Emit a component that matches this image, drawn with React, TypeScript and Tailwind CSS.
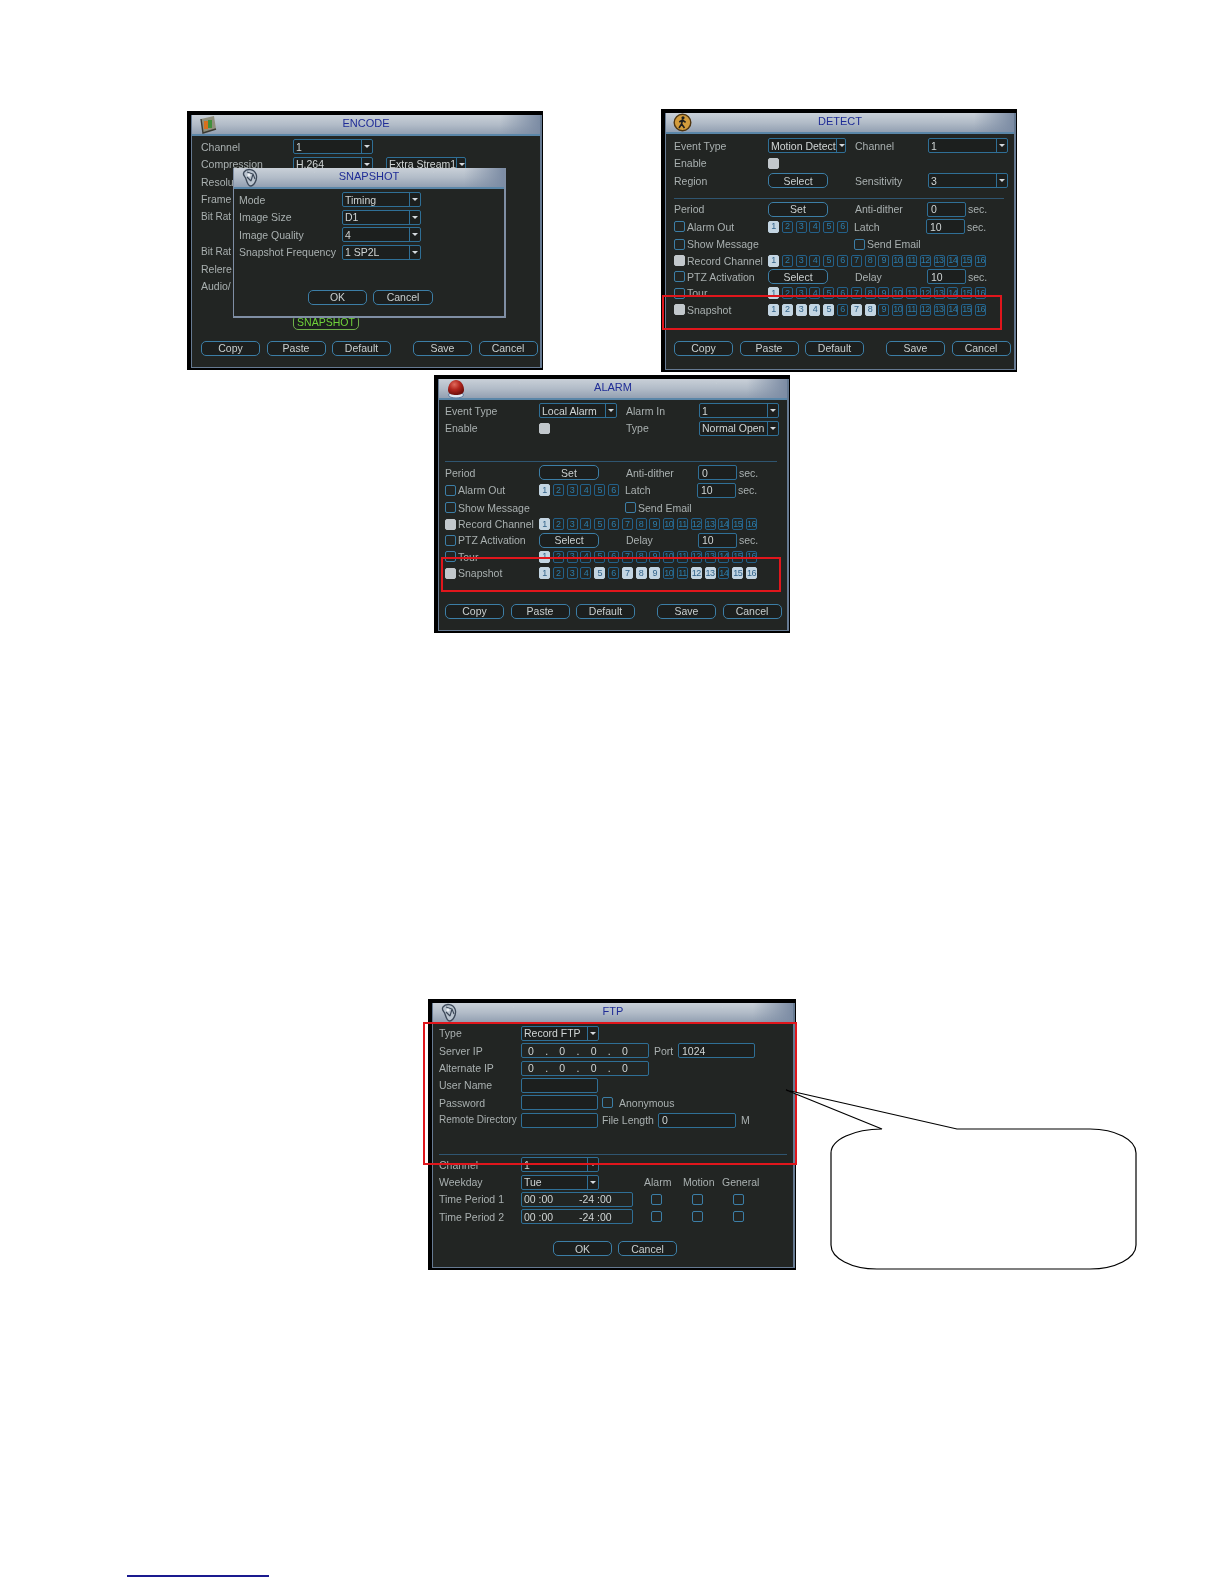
import React from 'react';

type Kind = 'encode' | 'detect' | 'alarm' | 'ghost';

const TitleIcon = ({ kind }: { kind: Kind }) => {
  if (kind === 'encode') {
    return (
      <svg width="18" height="19" viewBox="0 0 18 19">
        <path d="M2 4 L15 1 L17 14 L4 18 Z" fill="#8f8f7c" />
        <rect x="5" y="6" width="4" height="8" fill="#d8701c" />
        <rect x="9" y="5" width="4" height="8" fill="#3f8f3a" />
        <path d="M2 4 L4 18 L17 14" stroke="#3a3a32" strokeWidth="1.4" fill="none" />
      </svg>
    );
  }
  if (kind === 'detect') {
    return (
      <svg width="19" height="19" viewBox="0 0 19 19">
        <circle cx="9.5" cy="9.5" r="8.3" fill="#d39c3c" stroke="#4f3510" strokeWidth="1.4" />
        <circle cx="10" cy="4.8" r="1.6" fill="#1d1d1d" />
        <path d="M9.5 7 L8.6 11 L6 15 M8.6 11 L11.5 15 M6.3 9 L9.5 7 L12.6 9.4" stroke="#1d1d1d" strokeWidth="1.6" fill="none" />
      </svg>
    );
  }
  if (kind === 'alarm') {
    return (
      <svg width="20" height="20" viewBox="0 0 20 20">
        <defs>
          <radialGradient id="dome" cx="0.4" cy="0.3" r="0.7">
            <stop offset="0" stopColor="#e06a5c" />
            <stop offset="0.5" stopColor="#b2261e" />
            <stop offset="1" stopColor="#6e0f0c" />
          </radialGradient>
        </defs>
        <ellipse cx="10" cy="16" rx="7.5" ry="3" fill="#dfe8f2" stroke="#5f7da0" strokeWidth="1" />
        <path d="M2 11 C2 5 6 1 10 1 C14 1 18 5 18 11 C18 15 14 16 10 16 C6 16 2 15 2 11 Z" fill="url(#dome)" />
      </svg>
    );
  }
  return (
    <svg width="18" height="20" viewBox="0 0 18 20">
      <path d="M3 4 C6 0 13 1 15 6 C17 11 13 18 9.5 18 C7 18 6 14 5 11 C4 8 1 7 3 4 Z" fill="#b9c3ce" stroke="#3c4858" strokeWidth="1.3" />
      <path d="M6 4 L12 6 L10 13 M6 9 L10 13 M12 6 L14 11" stroke="#3c4858" strokeWidth="1.1" fill="none" />
      <circle cx="8" cy="7" r="1.6" fill="#eef1f4" />
    </svg>
  );
};

const Title = ({ kind, text }: { kind: Kind; text: string }) => (
  <div className="relative h-[21px] shrink-0 flex items-center justify-center pb-[2px] bg-gradient-to-b from-[#c9d0d8] via-[#b2bcc8] to-[#93a0b2] border-b-2 border-[#5a86a8]">
    <div className="absolute left-[80px] right-[70px] top-[2px] h-[3px] rounded-t-[2px] border-t border-x border-[#c2cad3]" />
    <div className="absolute right-0 top-0 bottom-0 w-[40px] bg-gradient-to-r from-transparent to-[#7c8ca4]" />
    <div className="absolute left-[7px] top-0">
      <TitleIcon kind={kind} />
    </div>
    <span className="relative text-[11px] text-[#1f2c96]">{text}</span>
  </div>
);

const Caret = () => (
  <span className="ml-auto w-[11px] shrink-0 self-stretch flex items-center justify-center border-l border-[#2f6f96]">
    <span className="w-0 h-0 border-l-[3px] border-r-[3px] border-t-[3px] border-l-transparent border-r-transparent border-t-[#d5dade]" />
  </span>
);

const Select = ({ w, text }: { w: string; text: string }) => (
  <div className={`${w} h-[15px] shrink-0 flex items-center pl-[2px] rounded-[2px] border border-[#2f6f96] text-[10.5px] leading-none text-[#d0d5d5] bg-[#1c1f1e]`}>
    <span className="whitespace-nowrap">{text}</span>
    <Caret />
  </div>
);

const Field = ({ w, text }: { w: string; text?: string }) => (
  <div className={`${w} h-[15px] shrink-0 flex items-center pl-[3px] rounded-[2px] border border-[#2f6f96] text-[10.5px] leading-none text-[#d0d5d5] bg-[#1c1f1e]`}>
    {text}
  </div>
);

const Btn = ({ w, text, tone = 'border-[#3c7ea6] text-[#c9cfcf]' }: { w: string; text: string; tone?: string }) => (
  <div className={`${w} h-[15px] shrink-0 flex items-center justify-center rounded-[5px] border text-[10.5px] leading-none bg-[#1c1f1e] ${tone}`}>
    {text}
  </div>
);

const Check = ({ on = false }: { on?: boolean }) => (
  <span className={`inline-block w-[11px] h-[11px] rounded-[2px] border shrink-0 ${on ? 'bg-[#c2c8cc] border-[#c2c8cc]' : 'border-[#3c7ea6]'}`} />
);

const Label = ({ children, className = '', size = 'text-[10.5px]' }: { children?: React.ReactNode; className?: string; size?: string }) => (
  <span className={`${size} shrink-0 leading-none whitespace-nowrap text-[#a9b0b0] ${className}`}>{children}</span>
);

const CheckLabel = ({ on, text }: { on?: boolean; text: string }) => (
  <span className="flex items-center gap-[2px]">
    <Check on={on} />
    <Label>{text}</Label>
  </span>
);

const Nums = ({ on, count = 16 }: { on: number[]; count?: number }) => (
  <div className="flex gap-[2.8px] shrink-0">
    {Array.from({ length: count }, (_, i) => i + 1).map((n) => (
      <span
        key={n}
        className={`w-[11px] h-[12px] flex items-center justify-center rounded-[2px] text-[9px] leading-none tracking-[-0.5px] border ${
          on.includes(n)
            ? 'bg-[#c3d5e2] border-[#c3d5e2] text-[#33648a]'
            : 'border-[#23618a] text-[#2b7cab]'
        }`}
      >
        {n}
      </span>
    ))}
  </div>
);

const Row = ({ h = 'h-[17.5px]', children }: { h?: string; children?: React.ReactNode }) => (
  <div className={`${h} shrink-0 flex items-center`}>{children}</div>
);

const Rule = () => <div className="h-px bg-[#2f5570]" />;

const BottomButtons = () => (
  <div className="flex gap-[6.5px]">
    <Btn w="w-[59px]" text="Copy" />
    <Btn w="w-[59px]" text="Paste" />
    <Btn w="w-[59px]" text="Default" />
    <span className="w-[9px]" />
    <Btn w="w-[59px]" text="Save" />
    <Btn w="w-[59px]" text="Cancel" />
  </div>
);

const Window = ({ className, over, children }: { className: string; over?: React.ReactNode; children: React.ReactNode }) => (
  <div className={`relative border-t-4 border-l-4 border-r border-b-2 border-black bg-black shrink-0 ${className}`}>
    <div className="h-full flex flex-col border-l border-r-2 border-b border-[#667a92] bg-[#222523] blur-[0.35px]">{children}</div>
    {over}
  </div>
);

const RedBox = ({ className }: { className: string }) => (
  <div className={`absolute border-2 border-[#e0161c] ${className}`} />
);

const Encode = () => (
  <Window className="w-[356px] h-[259px]">
    <Title kind="encode" text="ENCODE" />
    <div className="flex-1 pl-[9px] pt-[2px] flex flex-col">
      <Row>
        <Label className="w-[92px]">Channel</Label>
        <Select w="w-[80px]" text="1" />
      </Row>
      <Row>
        <Label className="w-[92px]">Compression</Label>
        <Select w="w-[80px]" text="H.264" />
        <span className="w-[13px]" />
        <Select w="w-[80px]" text="Extra Stream1" />
      </Row>
      <Row><Label>Resolu</Label></Row>
      <Row><Label>Frame</Label></Row>
      <Row><Label size="text-[10px]">Bit Rat</Label></Row>
      <Row />
      <Row><Label size="text-[10px]">Bit Rat</Label></Row>
      <Row><Label>Relere</Label></Row>
      <Row h="h-[16.5px]"><Label>Audio/</Label></Row>
      <div className="flex pl-[92px] mt-[20px]">
        <Btn w="w-[66px]" text="SNAPSHOT" tone="border-[#6fb04a] text-[#6fd23a]" />
      </div>
      <div className="mt-[11px]"><BottomButtons /></div>
    </div>
    {/* snapshot dialog over the encode window */}
    <div className="absolute left-[41px] top-[53px] w-[273px] h-[150px] flex flex-col border-l border-r-2 border-b-2 border-[#7f8ea4] bg-[#222523] blur-[0.35px]">
      <Title kind="ghost" text="SNAPSHOT" />
      <div className="pl-[5px] pt-[2px] flex flex-col">
        {[
          ['Mode', 'Timing'],
          ['Image Size', 'D1'],
          ['Image Quality', '4'],
          ['Snapshot Frequency', '1 SP2L'],
        ].map(([a, b]) => (
          <Row key={a}>
            <Label className="w-[103px]">{a}</Label>
            <Select w="w-[79px]" text={b} />
          </Row>
        ))}
        <div className="flex gap-[6px] pl-[69px] mt-[29px]">
          <Btn w="w-[59px]" text="OK" />
          <Btn w="w-[60px]" text="Cancel" />
        </div>
      </div>
    </div>
  </Window>
);

const AlarmRows = ({ snapOn }: { snapOn: number[] }) => (
  <>
    <Row>
      <Label className="w-[94px]">Period</Label>
      <Btn w="w-[60px]" text="Set" />
      <Label className="ml-[27px] w-[72px]">Anti-dither</Label>
      <Field w="w-[39px]" text="0" />
      <Label className="ml-[2px]">sec.</Label>
    </Row>
    <Row>
      <span className="w-[94px] shrink-0"><CheckLabel text="Alarm Out" /></span>
      <Nums on={[1]} count={6} />
      <Label className="ml-[6px] w-[72px]">Latch</Label>
      <Field w="w-[39px]" text="10" />
      <Label className="ml-[2px]">sec.</Label>
    </Row>
    <Row>
      <span className="w-[180px] shrink-0"><CheckLabel text="Show Message" /></span>
      <CheckLabel text="Send Email" />
    </Row>
    <Row h="h-[15.5px]">
      <span className="w-[94px] shrink-0"><CheckLabel on text="Record Channel" /></span>
      <Nums on={[1]} />
    </Row>
    <Row h="h-[16.5px]">
      <span className="w-[94px] shrink-0"><CheckLabel text="PTZ Activation" /></span>
      <Btn w="w-[60px]" text="Select" />
      <Label className="ml-[27px] w-[72px]">Delay</Label>
      <Field w="w-[39px]" text="10" />
      <Label className="ml-[2px]">sec.</Label>
    </Row>
    <Row h="h-[16.5px]">
      <span className="w-[94px] shrink-0"><CheckLabel text="Tour" /></span>
      <Nums on={[1]} />
    </Row>
    <Row h="h-[16.5px]">
      <span className="w-[94px] shrink-0"><CheckLabel on text="Snapshot" /></span>
      <Nums on={snapOn} />
    </Row>
  </>
);

const Detect = () => (
  <Window className="w-[356px] h-[263px]" over={<RedBox className="left-[-3px] top-[182px] w-[340px] h-[35px]" />}>
    <Title kind="detect" text="DETECT" />
    <div className="flex-1 pl-[8px] pt-[3px] flex flex-col">
      <Row>
        <Label className="w-[94px]">Event Type</Label>
        <Select w="w-[78px]" text="Motion Detect" />
        <Label className="ml-[9px] w-[73px]">Channel</Label>
        <Select w="w-[80px]" text="1" />
      </Row>
      <Row>
        <Label className="w-[94px]">Enable</Label>
        <Check on />
      </Row>
      <Row>
        <Label className="w-[94px]">Region</Label>
        <Btn w="w-[60px]" text="Select" />
        <Label className="ml-[27px] w-[73px]">Sensitivity</Label>
        <Select w="w-[80px]" text="3" />
      </Row>
      <div className="mt-[8px] mb-[2px] mr-[10px]"><Rule /></div>
      <AlarmRows snapOn={[1, 2, 3, 4, 5, 7, 8]} />
      <div className="mt-[23px]"><BottomButtons /></div>
    </div>
  </Window>
);

const Alarm = () => (
  <Window className="w-[356px] h-[258px]" over={<RedBox className="left-[3px] top-[178px] w-[340px] h-[35px]" />}>
    <Title kind="alarm" text="ALARM" />
    <div className="flex-1 pl-[6px] pt-[2px] flex flex-col">
      <Row>
        <Label className="w-[94px]">Event Type</Label>
        <Select w="w-[78px]" text="Local Alarm" />
        <Label className="ml-[9px] w-[73px]">Alarm In</Label>
        <Select w="w-[80px]" text="1" />
      </Row>
      <Row>
        <Label className="w-[94px]">Enable</Label>
        <Check on />
        <Label className="ml-[76px] w-[73px]">Type</Label>
        <Select w="w-[80px]" text="Normal Open" />
      </Row>
      <Row h="h-[24px]" />
      <div className="mb-[2px] mr-[10px]"><Rule /></div>
      <AlarmRows snapOn={[1, 5, 7, 8, 9, 12, 13, 15, 16]} />
      <div className="mt-[22.5px]"><BottomButtons /></div>
    </div>
  </Window>
);

const Ip = () => (
  <div className="w-[128px] h-[15px] shrink-0 flex items-center justify-between pl-[6px] pr-[20px] rounded-[2px] border border-[#2f6f96] text-[10.5px] leading-none text-[#d0d5d5]">
    <span>0</span><span>.</span><span>0</span><span>.</span><span>0</span><span>.</span><span>0</span>
  </div>
);

const Time = () => (
  <div className="w-[112px] h-[15px] shrink-0 flex items-center pl-[2px] rounded-[2px] border border-[#2f6f96] text-[10.5px] leading-none text-[#d0d5d5]">
    <span className="w-[55px]">00 :00</span><span>-24 :00</span>
  </div>
);

const FtpRow = ({ children }: { children?: React.ReactNode }) => <Row h="h-[17.3px]">{children}</Row>;

const Ftp = () => (
  <Window className="w-[368px] h-[271px]" over={<RedBox className="left-[-9px] top-[19px] w-[374px] h-[143px]" />}>
    <Title kind="ghost" text="FTP" />
    <div className="flex-1 pl-[6px] pt-[1px] flex flex-col">
      <FtpRow>
        <Label className="w-[82px]">Type</Label>
        <Select w="w-[78px]" text="Record FTP" />
      </FtpRow>
      <FtpRow>
        <Label className="w-[82px]">Server IP</Label>
        <Ip />
        <Label className="ml-[5px] w-[24px]">Port</Label>
        <Field w="w-[77px]" text="1024" />
      </FtpRow>
      <FtpRow>
        <Label className="w-[82px]">Alternate IP</Label>
        <Ip />
      </FtpRow>
      <FtpRow>
        <Label className="w-[82px]">User Name</Label>
        <Field w="w-[77px]" />
      </FtpRow>
      <FtpRow>
        <Label className="w-[82px]">Password</Label>
        <Field w="w-[77px]" />
        <span className="ml-[4px] flex"><Check /></span>
        <Label className="ml-[6px]">Anonymous</Label>
      </FtpRow>
      <FtpRow>
        <Label className="w-[82px]" size="text-[10px]">Remote Directory</Label>
        <Field w="w-[77px]" />
        <Label className="ml-[4px] w-[56px]">File Length</Label>
        <Field w="w-[78px]" text="0" />
        <Label className="ml-[5px]">M</Label>
      </FtpRow>
      <div className="mt-[25.5px] mb-[1px] mr-[6px]"><Rule /></div>
      <FtpRow>
        <Label className="w-[82px]">Channel</Label>
        <Select w="w-[78px]" text="1" />
      </FtpRow>
      <FtpRow>
        <Label className="w-[82px]">Weekday</Label>
        <Select w="w-[78px]" text="Tue" />
        <Label className="ml-[45px] w-[39px]">Alarm</Label>
        <Label className="w-[39px]">Motion</Label>
        <Label>General</Label>
      </FtpRow>
      {['Time Period 1', 'Time Period 2'].map((t) => (
        <FtpRow key={t}>
          <Label className="w-[82px]">{t}</Label>
          <Time />
          <span className="ml-[18px] w-[41px] shrink-0 flex"><Check /></span>
          <span className="w-[41px] shrink-0 flex"><Check /></span>
          <Check />
        </FtpRow>
      ))}
      <div className="flex gap-[6px] pl-[114px] mt-[16px]">
        <Btn w="w-[59px]" text="OK" />
        <Btn w="w-[59px]" text="Cancel" />
      </div>
    </div>
  </Window>
);

const Callout = () => (
  <svg className="absolute left-[780px] top-[1085px]" width="360" height="190" viewBox="0 0 360 190">
    <path
      d="M6 5 L177 44 L310 44 A46 24 0 0 1 356 68 L356 160 A46 24 0 0 1 310 184 L97 184 A46 24 0 0 1 51 160 L51 68 A51 24 0 0 1 102 44 Z"
      fill="#fff"
      stroke="#000"
      strokeWidth="1.2"
    />
  </svg>
);

export default function App() {
  return (
    <div className="relative w-[1224px] h-[1584px] bg-white overflow-hidden font-['Liberation_Sans',Arial,sans-serif]">
      <div className="pt-[109px]">
        <div className="flex items-start pl-[187px] gap-[118px]">
          <div className="mt-[2px]"><Encode /></div>
          <Detect />
        </div>
        <div className="pl-[434px] mt-[3px]"><Alarm /></div>
        <div className="pl-[428px] mt-[366px]"><Ftp /></div>
        <div className="ml-[127px] mt-[305px] w-[142px] h-[1.5px] bg-[#1a1a8f]" />
      </div>
      <Callout />
    </div>
  );
}
